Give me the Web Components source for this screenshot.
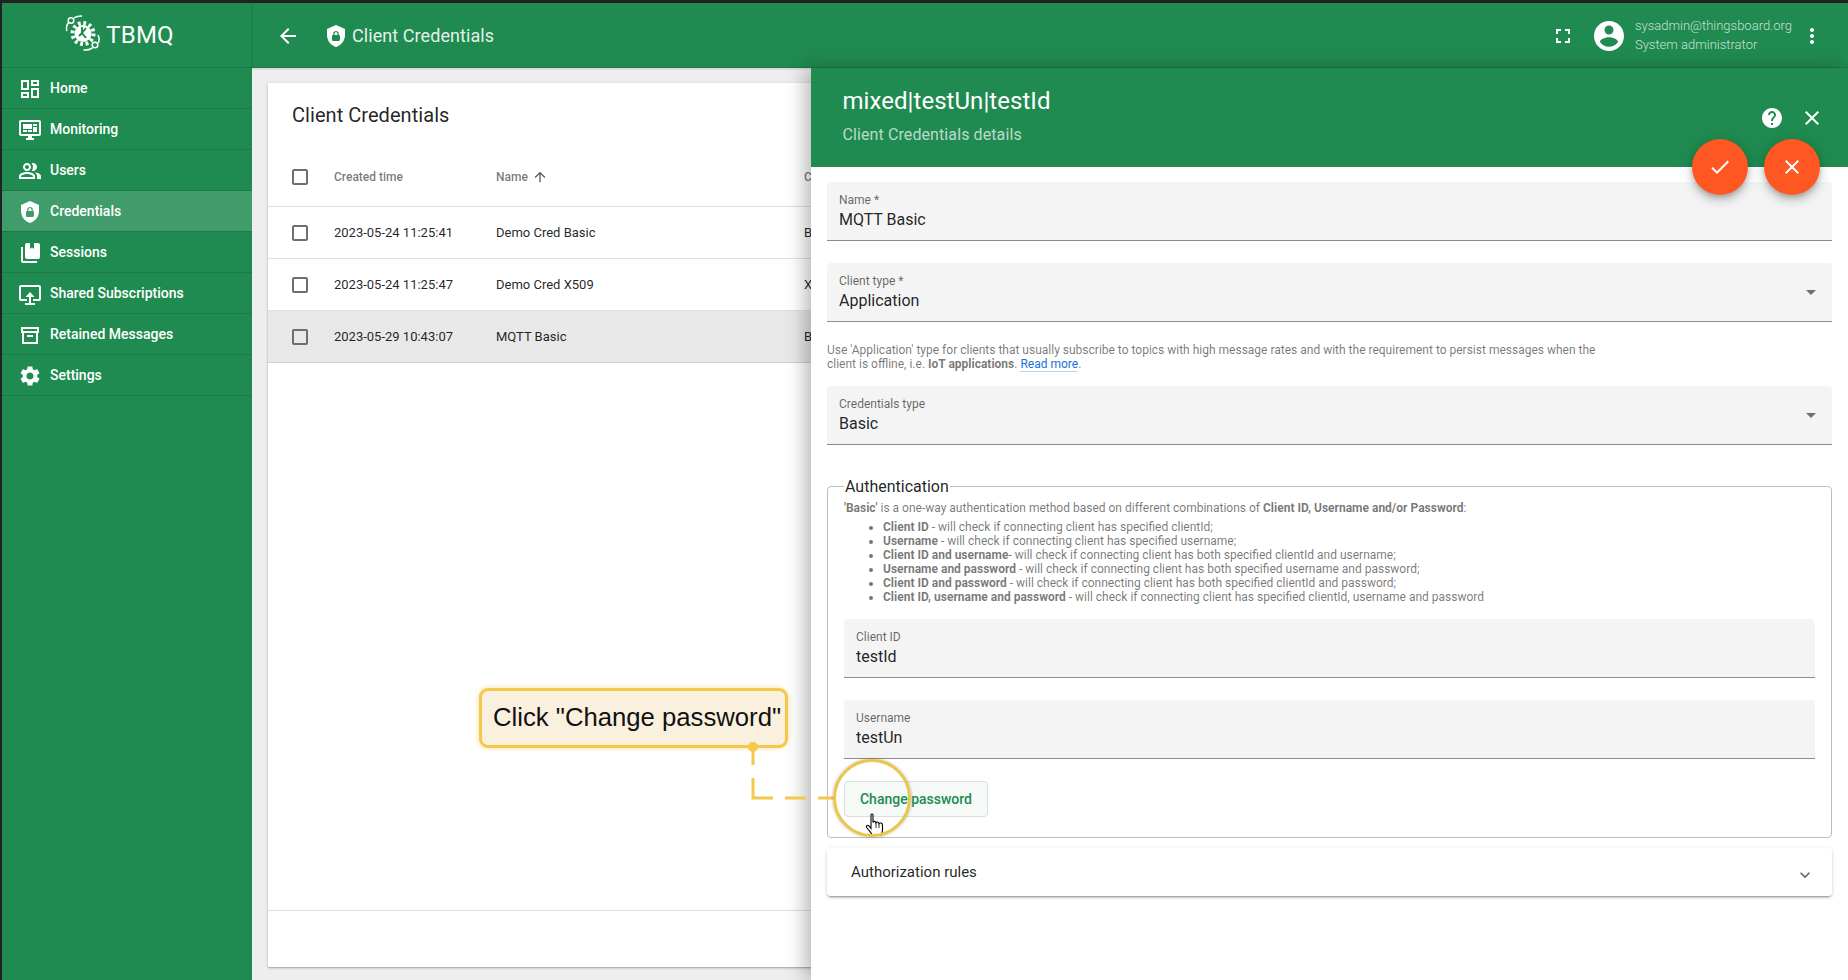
<!DOCTYPE html>
<html lang="en">
<head>
<meta charset="utf-8">
<title>TBMQ - Client Credentials</title>
<style>
  html, body { margin: 0; height: 100%; overflow: hidden; background: #212121; font-family: Roboto, "Liberation Sans", sans-serif; }
</style>
</head>
<body>
<tb-app>
  <tb-sidebar slot="side">
    <tb-nav-item icon="dashboard">Home</tb-nav-item>
    <tb-nav-item icon="monitoring">Monitoring</tb-nav-item>
    <tb-nav-item icon="people">Users</tb-nav-item>
    <tb-nav-item icon="shield" active>Credentials</tb-nav-item>
    <tb-nav-item icon="sessions">Sessions</tb-nav-item>
    <tb-nav-item icon="shared">Shared Subscriptions</tb-nav-item>
    <tb-nav-item icon="archive">Retained Messages</tb-nav-item>
    <tb-nav-item icon="settings">Settings</tb-nav-item>
  </tb-sidebar>
  <tb-toolbar slot="top" heading="Client Credentials" email="sysadmin@thingsboard.org" role-name="System administrator"></tb-toolbar>
  <tb-table slot="main" heading="Client Credentials">
    <tb-row date="2023-05-24 11:25:41" name="Demo Cred Basic" type="Basic"></tb-row>
    <tb-row date="2023-05-24 11:25:47" name="Demo Cred X509" type="X.509"></tb-row>
    <tb-row date="2023-05-29 10:43:07" name="MQTT Basic" type="Basic" selected></tb-row>
  </tb-table>
  <tb-drawer slot="over" heading="mixed|testUn|testId" sub="Client Credentials details">
    <tb-field label="Name *" value="MQTT Basic"></tb-field>
    <tb-field label="Client type *" value="Application" select></tb-field>
    <tb-hint>Use 'Application' type for clients that usually subscribe to topics with high message rates and with the requirement to persist messages when the<br>client is offline, i.e. <b>IoT applications</b>. <a>Read more</a>.</tb-hint>
    <tb-field label="Credentials type" value="Basic" select></tb-field>
    <tb-auth-box>
      <tb-field label="Client ID" value="testId"></tb-field>
      <tb-field label="Username" value="testUn"></tb-field>
    </tb-auth-box>
    <tb-expansion>Authorization rules</tb-expansion>
  </tb-drawer>
  <tb-callout slot="over">Click "Change password"</tb-callout>
</tb-app>

<script>
// material + hand drawn icon paths
const ICONS = {
    dashboard: 'M19 5v2h-4V5h4M9 5v6H5V5h4m10 8v6h-4v-6h4M9 17v2H5v-2h4M21 3h-8v6h8V3zM11 3H3v10h8V3zm10 8h-8v10h8V11zm-10 4H3v6h8v-6z',
    monitoring: 'M21,16V4H3V16H21M21,2A2,2 0 0,1 23,4V16A2,2 0 0,1 21,18H14V20H16V22H8V20H10V18H3C1.89,18 1,17.1 1,16V4C1,2.89 1.89,2 3,2H21M5,6H14V11H5V6M15,6H19V8H15V6M19,9V14H15V9H19M5,12H9V14H5V12M10,12H14V14H10V12Z',
    people: 'M16.67 13.13C18.04 14.06 19 15.32 19 17v3h4v-3c0-2.18-3.57-3.47-6.33-3.87zM15 12c2.21 0 4-1.79 4-4s-1.79-4-4-4c-.47 0-.91.1-1.33.24C14.5 5.27 15 6.58 15 8s-.5 2.73-1.33 3.76c.42.14.86.24 1.33.24zM9 12c2.21 0 4-1.79 4-4s-1.79-4-4-4-4 1.79-4 4 1.79 4 4 4zm0-6c1.1 0 2 .9 2 2s-.9 2-2 2-2-.9-2-2 .9-2 2-2zM9 13c-2.67 0-8 1.34-8 4v3h16v-3c0-2.66-5.33-4-8-4zm6 5H3v-.99C3.2 16.29 6.3 15 9 15s5.8 1.29 6 2v1z',
    shield: 'M12,1L3,5V11C3,16.55 6.84,21.74 12,23C17.16,21.74 21,16.55 21,11V5L12,1M12,7C13.4,7 14.8,8.1 14.8,9.5V11C15.4,11 16,11.6 16,12.3V15.8C16,16.4 15.4,17 14.7,17H9.2C8.6,17 8,16.4 8,15.7V12.2C8,11.6 8.6,11 9.2,11V9.5C9.2,8.1 10.6,7 12,7M12,8.2C11.2,8.2 10.5,8.7 10.5,9.5V11H13.5V9.5C13.5,8.7 12.8,8.2 12,8.2Z',
    sessions: 'M3 6h2v14h14v2H5a2 2 0 0 1-2-2V6zM9 2h3v6l2-1.5L16 8V2h4a2 2 0 0 1 2 2v12a2 2 0 0 1-2 2H9a2 2 0 0 1-2-2V4a2 2 0 0 1 2-2z',
    shared: 'M9 19H3a2 2 0 0 1-2-2V5a2 2 0 0 1 2-2h18a2 2 0 0 1 2 2v12a2 2 0 0 1-2 2h-6v-2h6V5H3v12h6zM12 10l-4.5 5H11v6H7v2h10v-2h-4v-6h3.5z',
    archive: 'M3 4h18v6h-1v11H4V10H3zm2 2v2h14V6zm1 4v9h12v-9zm3 2h6v2H9z',
    settings: 'M19.14 12.94c.04-.3.06-.61.06-.94 0-.32-.02-.64-.07-.94l2.03-1.58c.18-.14.23-.41.12-.61l-1.92-3.32c-.12-.22-.37-.29-.59-.22l-2.39.96c-.5-.38-1.03-.7-1.62-.94l-.36-2.54c-.04-.24-.24-.41-.48-.41h-3.84c-.24 0-.43.17-.47.41l-.36 2.54c-.59.24-1.13.57-1.62.94l-2.39-.96c-.22-.08-.47 0-.59.22L2.74 8.87c-.12.21-.08.47.12.61l2.03 1.58c-.05.3-.09.63-.09.94s.02.64.07.94l-2.03 1.58c-.18.14-.23.41-.12.61l1.92 3.32c.12.22.37.29.59.22l2.39-.96c.5.38 1.03.7 1.62.94l.36 2.54c.05.24.24.41.48.41h3.84c.24 0 .44-.17.47-.41l.36-2.54c.59-.24 1.13-.56 1.62-.94l2.39.96c.22.08.47 0 .59-.22l1.92-3.32c.12-.22.07-.47-.12-.61l-2.01-1.58zM12 15.6c-1.98 0-3.6-1.62-3.6-3.6s1.62-3.6 3.6-3.6 3.6 1.62 3.6 3.6-1.62 3.6-3.6 3.6z',
    back: 'M20 11H7.83l5.59-5.59L12 4l-8 8 8 8 1.41-1.41L7.83 13H20v-2z',
    fullscreen: 'M7 14H5v5h5v-2H7v-3zm-2-4h2V7h3V5H5v5zm12 7h-3v2h5v-5h-2v3zM14 5v2h3v3h2V5h-5z',
    account: 'M12 2C6.48 2 2 6.48 2 12s4.48 10 10 10 10-4.48 10-10S17.52 2 12 2zm0 3c1.66 0 3 1.34 3 3s-1.34 3-3 3-3-1.34-3-3 1.34-3 3-3zm0 14.2c-2.5 0-4.71-1.28-6-3.22.03-1.99 4-3.08 6-3.08 1.99 0 5.97 1.09 6 3.08-1.29 1.94-3.5 3.22-6 3.22z',
    more: 'M12 8c1.1 0 2-.9 2-2s-.9-2-2-2-2 .9-2 2 .9 2 2 2zm0 2c-1.1 0-2 .9-2 2s.9 2 2 2 2-.9 2-2-.9-2-2-2zm0 6c-1.1 0-2 .9-2 2s.9 2 2 2 2-.9 2-2-.9-2-2-2z',
    help: 'M12 2C6.48 2 2 6.48 2 12s4.48 10 10 10 10-4.48 10-10S17.52 2 12 2zm1 17h-2v-2h2v2zm2.07-7.75l-.9.92C13.45 12.9 13 13.5 13 15h-2v-.5c0-1.1.45-2.1 1.17-2.83l1.24-1.26c.37-.36.59-.86.59-1.41 0-1.1-.9-2-2-2s-2 .9-2 2H8c0-2.21 1.79-4 4-4s4 1.79 4 4c0 .88-.36 1.68-.93 2.25z',
    close: 'M19 6.41L17.59 5 12 10.59 6.41 5 5 6.41 10.59 12 5 17.59 6.41 19 12 13.41 17.59 19 19 17.59 13.41 12z',
    check: 'M9 16.17L4.83 12l-1.42 1.41L9 19 21 7l-1.41-1.41z',
    up: 'M4 12l1.41 1.41L11 7.83V20h2V7.83l5.58 5.59L20 12l-8-8-8 8z',
    dropdown: 'M7 10l5 5 5-5z',
    expand: 'M16.59 8.59L12 13.17 7.41 8.59 6 10l6 6 6-6z'
};

class TbIcon extends HTMLElement {
    constructor() {
        super();
        const size = this.getAttribute('size') || 24;
        const shadow = this.attachShadow({ mode: 'open' });
        shadow.innerHTML = `
            <style>
                :host { display: block; width: ${size}px; height: ${size}px; flex: none; color: inherit; }
                svg { display: block; fill: currentColor; }
            </style>
            <svg width="${size}" height="${size}" viewBox="0 0 24 24"><path d="${ICONS[this.getAttribute('name')]}"></path></svg>
        `;
    }
}

class TbApp extends HTMLElement {
    constructor() {
        super();
        const shadow = this.attachShadow({ mode: 'open' });
        shadow.innerHTML = `
            <style>
                :host { display: block; position: relative; height: 980px; box-sizing: border-box; padding: 3px 0 0 2px; }
                .shell { display: grid; grid-template-columns: 250px 1fr; grid-template-rows: 65px 1fr; height: 977px; background: #eeeeee; }
                ::slotted([slot=side]) { grid-row: 1 / 3; }
            </style>
            <div class="shell">
                <slot name="side"></slot>
                <slot name="top"></slot>
                <slot name="main"></slot>
            </div>
            <slot name="over"></slot>
        `;
    }
}

class TbSidebar extends HTMLElement {
    constructor() {
        super();
        const shadow = this.attachShadow({ mode: 'open' });
        shadow.innerHTML = `
            <style>
                :host { display: block; background: #208b50; color: #fff; font-family: Roboto, sans-serif; }
                .brand { height: 64px; border-bottom: 1px solid #1b7a46; display: flex; align-items: center; justify-content: center; gap: 5px; padding-right: 15px; }
                .brand span { font-size: 24px; font-weight: 400; color: #fff; letter-spacing: .2px; }
                svg { display: block; margin-top: -5px; }
            </style>
            <div class="brand">
                <svg width="36" height="36" viewBox="0 0 36 36" fill="none" stroke="#fff">
                    <circle cx="18" cy="18.500" r="10.500" stroke-width="4" stroke-dasharray="2.800 2.700"></circle>
                    <circle cx="18" cy="18.500" r="8.500" fill="#fff" stroke="none"></circle>
                    <path d="M17 12v6l-3 3M21 13l-4 5 4 5" stroke="#208b50" stroke-width="2"></path>
                    <circle cx="6" cy="5.500" r="2.800" stroke-width="1.500"></circle>
                    <path d="M2 16c-1-3-.5-6 1.500-8.500M9 3c2-1.500 5-2 8-2" stroke-width="1.500"></path>
                    <circle cx="30" cy="30" r="2.800" stroke-width="1.500" fill="#208b50"></circle>
                    <path d="M33 20c1.500 3 1.500 6 0 8M27.500 33c-3 1.800-6 2.300-9 2" stroke-width="1.500"></path>
                </svg>
                <span>TBMQ</span>
            </div>
            <slot></slot>
        `;
    }
}

class TbNavItem extends HTMLElement {
    constructor() {
        super();
        const shadow = this.attachShadow({ mode: 'open' });
        shadow.innerHTML = `
            <style>
                :host { display: flex; align-items: center; gap: 8px; height: 40px; padding-left: 16px; border-bottom: 1px solid #1b7a46; font-size: 14px; font-weight: 500; color: #fff; }
                :host([active]) { background: #409c6b; }
                tb-icon { margin-top: 1px; }
            </style>
            <tb-icon name="${this.getAttribute('icon')}"></tb-icon>
            <slot></slot>
        `;
    }
}

class TbToolbar extends HTMLElement {
    constructor() {
        super();
        const shadow = this.attachShadow({ mode: 'open' });
        shadow.innerHTML = `
            <style>
                :host { display: flex; align-items: center; box-sizing: border-box; height: 65px; padding-top: 2px; background: #208b50; border-bottom: 1px solid #1b7a46; border-left: 1px solid #1d8149; color: #fff; font-family: Roboto, sans-serif; box-shadow: 0 1px 2px rgba(0,0,0,.15); z-index: 1; }
                .title { display: flex; align-items: center; margin-left: 23px; }
                .title tb-icon:last-of-type { margin-left: 24px; margin-right: 4px; }
                h1 { margin: 0; font-size: 18px; font-weight: 400; line-height: 24px; letter-spacing: .07px; color: rgba(255,255,255,.9); }
                .right { margin-left: auto; display: flex; align-items: center; padding-right: 24px; }
                .user { margin: -2px 8px 0 8px; line-height: 19px; font-size: 13px; font-weight: 300; color: rgba(255,255,255,.75); white-space: nowrap; }
                .fs { margin-right: 16px; }
            </style>
            <div class="title">
                <tb-icon name="back"></tb-icon>
                <tb-icon name="shield"></tb-icon>
                <h1>${this.getAttribute('heading')}</h1>
            </div>
            <div class="right">
                <tb-icon class="fs" name="fullscreen"></tb-icon>
                <tb-icon name="account" size="36"></tb-icon>
                <div class="user">
                    <div>${this.getAttribute('email')}</div>
                    <div>${this.getAttribute('role-name')}</div>
                </div>
                <tb-icon name="more"></tb-icon>
            </div>
        `;
    }
}

const ROW_GRID = 'display: grid; grid-template-columns: 42px 162px 308px 1fr; align-items: center; padding-left: 24px;';

class TbCheckbox extends HTMLElement {
    constructor() {
        super();
        const shadow = this.attachShadow({ mode: 'open' });
        shadow.innerHTML = `
            <style>
                :host { display: block; width: 16px; height: 16px; box-sizing: border-box; border: 2px solid #6e6e6e; border-radius: 2px; }
            </style>
        `;
    }
}

class TbTable extends HTMLElement {
    constructor() {
        super();
        const shadow = this.attachShadow({ mode: 'open' });
        shadow.innerHTML = `
            <style>
                :host { display: flex; flex-direction: column; margin: 15px 16px 13px 16px; background: #fff; font-family: Roboto, sans-serif; box-shadow: 0 1px 3px rgba(0,0,0,.2), 0 1px 1px rgba(0,0,0,.14); }
                h2 { margin: 0; padding-left: 24px; height: 64px; line-height: 64px; font-size: 20px; font-weight: 400; letter-spacing: .05px; color: rgba(0,0,0,.87); }
                .head { ${ROW_GRID} height: 59px; border-bottom: 1px solid #e0e0e0; font-size: 12px; font-weight: 500; color: rgba(0,0,0,.54); }
                .sort { display: flex; align-items: center; gap: 4px; }
                .sort tb-icon { color: rgba(0,0,0,.65); }
                .rows { flex: 1; }
                .foot { height: 56px; border-top: 1px solid #e0e0e0; }
            </style>
            <h2>${this.getAttribute('heading')}</h2>
            <div class="head">
                <tb-checkbox></tb-checkbox>
                <div>Created time</div>
                <div class="sort">Name <tb-icon name="up" size="16"></tb-icon></div>
                <div>Credentials type</div>
            </div>
            <div class="rows"><slot></slot></div>
            <div class="foot"></div>
        `;
    }
}

class TbRow extends HTMLElement {
    constructor() {
        super();
        const shadow = this.attachShadow({ mode: 'open' });
        shadow.innerHTML = `
            <style>
                :host { ${ROW_GRID} height: 51px; border-bottom: 1px solid #e0e0e0; font-size: 13px; color: rgba(0,0,0,.87); }
                :host([selected]) { background: #e8e8e8; border-bottom-color: #cfcfcf; }
            </style>
            <tb-checkbox></tb-checkbox>
            <div>${this.getAttribute('date')}</div>
            <div>${this.getAttribute('name')}</div>
            <div>${this.getAttribute('type')}</div>
        `;
    }
}

class TbDrawer extends HTMLElement {
    constructor() {
        super();
        const shadow = this.attachShadow({ mode: 'open' });
        shadow.innerHTML = `
            <style>
                :host { position: absolute; top: 68px; right: 0; bottom: 0; width: 1037px; background: #fff; font-family: Roboto, sans-serif; box-shadow: -6px 0 18px rgba(0,0,0,.28); z-index: 2; }
                header { box-sizing: border-box; height: 99px; background: #208b50; color: #fff; display: flex; align-items: center; padding: 0 16px 0 31.500px; }
                .text { flex: 1; align-self: flex-start; padding-top: 17px; }
                h2 { margin: 0; font-size: 24px; font-weight: 400; line-height: 32px; letter-spacing: .05px; }
                p { margin: 6px 0 0; font-size: 16px; line-height: 24px; letter-spacing: .1px; color: rgba(255,255,255,.7); }
                .act { width: 40px; display: flex; justify-content: center; }
                .fab { position: absolute; z-index: 2; top: 71px; width: 56px; height: 56px; border-radius: 50%; background: #ff5722; color: #fff; display: flex; align-items: center; justify-content: center; box-shadow: 0 3px 5px -1px rgba(0,0,0,.2), 0 6px 10px rgba(0,0,0,.14), 0 1px 18px rgba(0,0,0,.12); }
                .body { padding: 15px 16px 0; }
                ::slotted(tb-field) { margin-bottom: 22px; }
            </style>
            <header>
                <div class="text">
                    <h2>${this.getAttribute('heading')}</h2>
                    <p>${this.getAttribute('sub')}</p>
                </div>
                <div class="act"><tb-icon name="help"></tb-icon></div>
                <div class="act"><tb-icon name="close"></tb-icon></div>
            </header>
            <div class="fab" style="right: 100px"><tb-icon name="check"></tb-icon></div>
            <div class="fab" style="right: 28px"><tb-icon name="close"></tb-icon></div>
            <div class="body"><slot></slot></div>
        `;
    }
}

class TbField extends HTMLElement {
    constructor() {
        super();
        const shadow = this.attachShadow({ mode: 'open' });
        const arrow = this.hasAttribute('select') ? '<tb-icon class="arrow" name="dropdown"></tb-icon>' : '';
        shadow.innerHTML = `
            <style>
                :host { display: block; position: relative; box-sizing: border-box; height: 59px; padding: 11px 12px 0; background: #f4f4f4; border-bottom: 1px solid #8c8c8c; border-radius: 4px 4px 0 0; }
                label { display: block; font-size: 12px; line-height: 15px; color: rgba(0,0,0,.6); }
                div { font-size: 16px; line-height: 24px; color: rgba(0,0,0,.87); }
                .arrow { position: absolute; right: 9px; top: 17px; color: rgba(0,0,0,.54); }
            </style>
            <label>${this.getAttribute('label')}</label>
            <div>${this.getAttribute('value')}</div>
            ${arrow}
        `;
    }
}

class TbHint extends HTMLElement {
    constructor() {
        super();
        const shadow = this.attachShadow({ mode: 'open' });
        shadow.innerHTML = `
            <style>
                :host { display: block; margin: -1px 0 15px; font-size: 12px; line-height: 14px; color: rgba(0,0,0,.54); }
                ::slotted(a) { color: #1a6fd8; border-bottom: 1px solid #b9d3f3; }
            </style>
            <slot></slot>
        `;
    }
}

class TbAuthBox extends HTMLElement {
    constructor() {
        super();
        const shadow = this.attachShadow({ mode: 'open' });
        shadow.innerHTML = `
            <style>
                :host { display: block; margin: 30px 0 10px; }
                fieldset { margin: 0; padding: 0 16px 20px; border: 1px solid #bdbdbd; border-radius: 4px; min-width: 0; }
                legend { padding: 2px 1px 0; font-size: 16px; line-height: 20px; color: rgba(0,0,0,.87); }
                .desc { margin-top: 4px; font-size: 12px; line-height: 14px; color: rgba(0,0,0,.54); }
                ul { margin: 5px 0 15px; padding-left: 39px; }
                b { font-weight: 700; }
                button { display: block; box-sizing: border-box; width: 144px; height: 36px; margin-top: 22px; padding: 0; border: 1px solid #dcdfdd; border-radius: 4px; background: #f5faf7; color: #208b50; font: 500 14px Roboto, sans-serif; }
                ::slotted(tb-field) { margin-bottom: 22px; }
                ::slotted(tb-field:last-child) { margin-bottom: 0; }
            </style>
            <fieldset>
                <legend>Authentication</legend>
                <div class="desc">
                    <b>'Basic'</b> is a one-way authentication method based on different combinations of <b>Client ID, Username and/or Password</b>:
                    <ul>
                        <li><b>Client ID</b> - will check if connecting client has specified clientId;</li>
                        <li><b>Username</b> - will check if connecting client has specified username;</li>
                        <li><b>Client ID and username</b>- will check if connecting client has both specified clientId and username;</li>
                        <li><b>Username and password</b> - will check if connecting client has both specified username and password;</li>
                        <li><b>Client ID and password</b> - will check if connecting client has both specified clientId and password;</li>
                        <li><b>Client ID, username and password</b> - will check if connecting client has specified clientId, username and password</li>
                    </ul>
                </div>
                <slot></slot>
                <button>Change password</button>
            </fieldset>
        `;
    }
}

class TbExpansion extends HTMLElement {
    constructor() {
        super();
        const shadow = this.attachShadow({ mode: 'open' });
        shadow.innerHTML = `
            <style>
                :host { display: flex; align-items: center; justify-content: space-between; box-sizing: border-box; height: 48px; padding: 0 17px 0 24px; background: #fff; border-radius: 4px; font-size: 15px; font-weight: 400; color: rgba(0,0,0,.87); box-shadow: 0 3px 1px -2px rgba(0,0,0,.2), 0 2px 2px rgba(0,0,0,.14), 0 1px 5px rgba(0,0,0,.12); }
                tb-icon { color: rgba(0,0,0,.6); margin-top: 5px; }
            </style>
            <slot></slot>
            <tb-icon name="expand" size="20"></tb-icon>
        `;
    }
}

// tutorial overlay: box, dashed leader, ring and hand pointer lie over the page
class TbCallout extends HTMLElement {
    constructor() {
        super();
        const shadow = this.attachShadow({ mode: 'open' });
        shadow.innerHTML = `
            <style>
                :host { position: absolute; left: 0; top: 0; z-index: 3; }
                .box { position: absolute; left: 479px; top: 688px; box-sizing: border-box; width: 309px; height: 60px; display: flex; align-items: center; padding: 0 0 2px 11px; border: 3px solid #f3c84b; border-radius: 9px; background: #faf0de; box-shadow: 0 0 5px rgba(243,200,75,.6); font: 25.700px "Liberation Sans", Arial, sans-serif; color: #111; white-space: nowrap; }
                .ring { position: absolute; left: 833px; top: 759px; box-sizing: border-box; width: 78px; height: 78px; border: 3px solid #e9c64d; border-radius: 50%; box-shadow: 0 0 3px rgba(120,100,20,.6); }
                svg { position: absolute; display: block; }
            </style>
            <div class="box"><slot></slot></div>
            <svg style="left:0;top:0" width="1848" height="980" fill="none" stroke="#f3c84b" stroke-width="3">
                <circle cx="753" cy="747" r="5" fill="#f3c84b" stroke="none"></circle>
                <path d="M753 747v18M753 778v20h20M785 798h21M818 798h15"></path>
            </svg>
            <svg style="left:865px;top:813px" width="19" height="23" viewBox="0 0 19 23" fill="#fff" stroke="#000" stroke-width="1.100">
                <path d="M6 2C6 .6 8 .6 8 2V9.500C8.500 8 10.500 8 11 9.800 11.500 8.600 13.500 8.800 14 10.500 14.500 9.600 17.500 9.800 17.500 12V17C17.500 19 16.500 20 16 22.500H7.500C7 20 4.500 18.500 2 15 .5 12.800 2.500 11.500 4 13L6 15.500Z"></path>
                <path d="M11 10v5M14 10.500V15" stroke-width=".8"></path>
            </svg>
            <div class="ring"></div>
        `;
    }
}

customElements.define('tb-icon', TbIcon);
customElements.define('tb-app', TbApp);
customElements.define('tb-sidebar', TbSidebar);
customElements.define('tb-nav-item', TbNavItem);
customElements.define('tb-toolbar', TbToolbar);
customElements.define('tb-checkbox', TbCheckbox);
customElements.define('tb-table', TbTable);
customElements.define('tb-row', TbRow);
customElements.define('tb-drawer', TbDrawer);
customElements.define('tb-field', TbField);
customElements.define('tb-hint', TbHint);
customElements.define('tb-auth-box', TbAuthBox);
customElements.define('tb-expansion', TbExpansion);
customElements.define('tb-callout', TbCallout);
</script>
</body>
</html>
